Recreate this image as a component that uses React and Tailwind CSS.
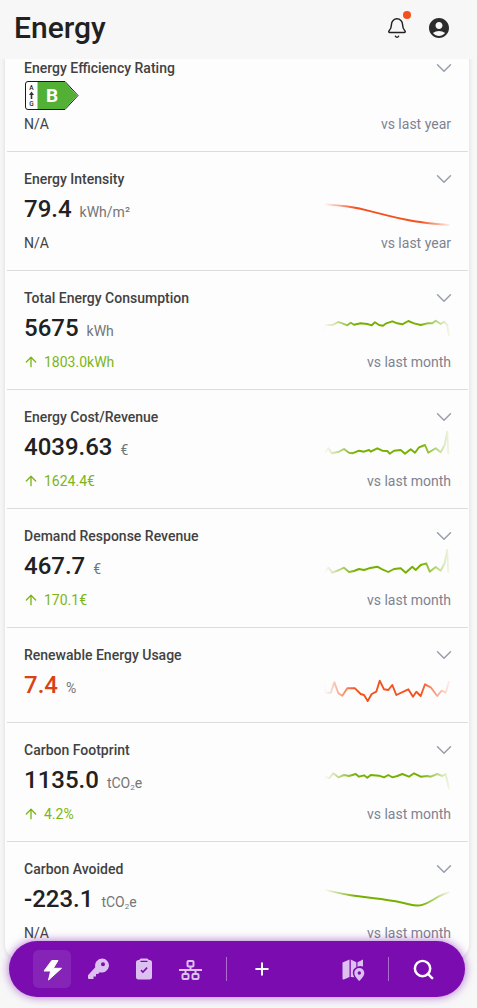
import React from "react";
import { ArrowUp, ChevronDown, Search, Plus, Bell } from "lucide-react";
import { MdAccountCircle } from "react-icons/md";

const ORANGE = "#f4511e";
const GREEN = "#76b000";

function toPath(points, smooth) {
  if (!smooth) return "M" + points.map((p) => p.map((n) => n.toFixed(1)).join(" ")).join("L");
  let d = `M${points[0][0].toFixed(1)} ${points[0][1].toFixed(1)}`;
  for (let i = 1; i < points.length - 1; i++) {
    const mx = (points[i][0] + points[i + 1][0]) / 2;
    const my = (points[i][1] + points[i + 1][1]) / 2;
    d += `Q${points[i][0].toFixed(1)} ${points[i][1].toFixed(1)} ${mx.toFixed(1)} ${my.toFixed(1)}`;
  }
  const l = points[points.length - 1];
  return d + `L${l[0].toFixed(1)} ${l[1].toFixed(1)}`;
}

function Spark({ id, color, pts, oy, top, smooth }) {
  const points = pts.map(([x, y]) => [300 + x / 3 - 325, oy + y / 3 - top - 1]);
  return (
    <svg viewBox="0 0 127 34" className="ml-auto h-[34px] w-[127px] shrink-0 overflow-visible" fill="none">
      <defs>
        <linearGradient id={id} gradientUnits="userSpaceOnUse" x1="0" y1="0" x2="127" y2="0">
          <stop offset="0" stopColor={color} stopOpacity="0" />
          <stop offset="0.25" stopColor={color} stopOpacity="1" />
          <stop offset="0.76" stopColor={color} stopOpacity="1" />
          <stop offset="0.9" stopColor={color} stopOpacity="0.45" />
          <stop offset="1" stopColor={color} stopOpacity="0.03" />
        </linearGradient>
      </defs>
      <path d={toPath(points, smooth)} stroke={`url(#${id})`} strokeWidth="1.9" strokeLinejoin="round" strokeLinecap="round" />
    </svg>
  );
}

function Badge() {
  return (
    <svg width="54" height="29" viewBox="0 0 54 29" className="ml-[1px]">
      <path d="M3 .5H40L53 14.5L40 28.5H3A2.5 2.5 0 0 1 .5 26V3A2.5 2.5 0 0 1 3 .5Z" fill="#fff" stroke="#1a1a1a" strokeWidth="1" />
      <path d="M12.500 1H39.800L52.300 14.500L39.800 28H12.500Z" fill="#52b034" />
      <text x="6.500" y="9" textAnchor="middle" fontSize="6.500" fontFamily="Roboto, sans-serif" fontWeight="500" fill="#222">A</text>
      <path d="M6.500 10.500L9 14H7.300V18H5.700V14H4Z" fill="#333" />
      <text x="6.500" y="25" textAnchor="middle" fontSize="6.500" fontFamily="Roboto, sans-serif" fontWeight="500" fill="#222">G</text>
      <text x="27" y="21" textAnchor="middle" fontSize="19" fontFamily="Roboto, sans-serif" fontWeight="700" fill="#fff">B</text>
    </svg>
  );
}

function Unit({ children }) {
  return <span className="text-[14px] text-[#757575]">{children}</span>;
}

function CO2() {
  return (
    <span className="text-[14px] text-[#757575]">
      tCO<sub className="text-[8px]">2</sub>e
    </span>
  );
}

function Row({ title, value, unit, valueColor = "text-[#212121]", spark, badge, delta, compare, last }) {
  return (
    <div className={`mr-[1px] ml-[2px] pt-[17px] pr-[17px] pl-[17px] ${compare ? "pb-[17px]" : "pb-[20px]"} ${last ? "" : "border-b border-[#dcdcdc]"}`}>
      <div className="flex h-5 items-center justify-between">
        <span className="text-[14px] font-medium text-[#424242]">{title}</span>
        <ChevronDown size={26} strokeWidth={1.4} className="mr-[-6px] text-[#9aa0ae]" />
      </div>
      <div className="mt-[3px] flex h-[34px] items-center">
        {badge ? (
          <div className="h-full"><Badge /></div>
        ) : (
          <div className="flex items-baseline">
            <span className={`text-[24px] font-medium ${valueColor}`}>{value}</span>
            <span className="ml-[8px]">{unit}</span>
          </div>
        )}
        {spark}
      </div>
      {compare && (
        <div className={`${badge ? "mt-[-1px]" : "mt-[7px]"} flex h-5 items-center justify-between text-[14px]`}>
          {delta ? (
            <span className="flex items-center gap-[5px] text-[#7cb518]">
              <ArrowUp size={16} strokeWidth={2} className="ml-[-1px]" />
              {delta}
            </span>
          ) : (
            <span className="text-[#424242]">N/A</span>
          )}
          <span className="text-[#7d8392]">{compare}</span>
        </div>
      )}
    </div>
  );
}

function NavBtn({ children, active }) {
  return (
    <div className={`flex h-[38px] w-[38px] shrink-0 items-center justify-center rounded-[6px] ${active ? "bg-white/10" : ""}`}>
      {children}
    </div>
  );
}

const total = [[75,425],[78,405],[100,405],[118,396],[130,400],[145,406],[155,398],[165,404],[185,400],[205,402],[218,406],[228,397],[240,405],[252,407],[262,400],[280,394],[295,400],[310,403],[328,393],[345,400],[365,405],[385,400],[400,400],[410,392],[425,402],[435,395],[445,405],[450,435]];
const cost = [[75,102],[88,85],[98,100],[120,95],[135,87],[150,98],[160,100],[180,92],[195,95],[210,90],[215,95],[235,85],[250,92],[265,93],[272,101],[285,92],[305,90],[318,101],[335,88],[348,98],[360,82],[378,75],[388,98],[410,85],[425,97],[437,75],[445,35],[448,100]];
const demand = [[75,458],[88,443],[100,458],[120,450],[135,443],[150,456],[165,453],[180,447],[195,450],[210,445],[235,440],[250,448],[268,456],[285,447],[305,445],[320,458],[340,440],[350,450],[365,435],[382,430],[392,455],[410,441],[425,452],[437,430],[445,390],[448,455]];
const renew = [[72,30],[80,68],[95,68],[106,37],[118,70],[130,77],[145,55],[168,55],[185,72],[195,75],[206,93],[218,72],[232,65],[242,32],[255,58],[268,60],[280,45],[292,75],[328,58],[342,80],[352,65],[365,78],[378,43],[395,52],[415,78],[428,62],[440,68],[450,35]];
const carbon = [[72,350],[76,318],[90,325],[103,310],[118,322],[135,315],[150,318],[170,312],[180,320],[195,316],[205,323],[215,315],[240,317],[255,322],[268,315],[280,322],[295,318],[310,312],[330,320],[345,310],[365,320],[385,318],[395,320],[415,312],[430,318],[440,312],[450,355]];
const avoided = [[72,58],[130,72],[180,79],[270,90],[310,98],[355,109],[385,100],[420,78],[450,67]];
const intensity = [[75,43],[130,47],[180,55],[240,70],[300,85],[360,97],[450,105]];

export default function App() {
  return (
    <div className="relative h-screen overflow-hidden bg-[#f7f7f7]" style={{ fontFamily: "Roboto, sans-serif" }}>
      <header className="relative z-10 flex h-[59px] items-center justify-between bg-[#f7f7f7] pr-[26px] pl-[14px]">
        <h1 className="mt-[-4px] text-[30px] leading-[56px] font-medium text-[#212121]">Energy</h1>
        <div className="mt-[-3px] flex items-center gap-[19px]">
          <div className="relative">
            <Bell size={22} strokeWidth={1.6} className="text-[#212121]" />
            <span className="absolute top-[-6px] right-[-3px] h-2 w-2 rounded-full bg-[#f4511e]" />
          </div>
          <MdAccountCircle size={24} className="text-[#2b2b2b]" />
        </div>
      </header>

      <main className="mt-[-18px] mr-[8px] ml-[5px] rounded-b-[16px] bg-[#fdfdfd] shadow-[0_0_5px_rgba(0,0,0,0.12)]">
        <Row title="Energy Efficiency Rating" badge compare="vs last year" />
        <Row title="Energy Intensity" value="79.4" unit={<Unit>kWh/m²</Unit>} compare="vs last year"
          spark={<Spark id="s2" color={ORANGE} pts={intensity} oy={190} top={191} smooth />} />
        <Row title="Total Energy Consumption" value="5675" unit={<Unit>kWh</Unit>} delta="1803.0kWh" compare="vs last month"
          spark={<Spark id="s3" color={GREEN} pts={total} oy={190} top={310} />} />
        <Row title="Energy Cost/Revenue" value="4039.63" unit={<Unit>€</Unit>} delta="1624.4€" compare="vs last month"
          spark={<Spark id="s4" color={GREEN} pts={cost} oy={420} top={429} />} />
        <Row title="Demand Response Revenue" value="467.7" unit={<Unit>€</Unit>} delta="170.1€" compare="vs last month"
          spark={<Spark id="s5" color={GREEN} pts={demand} oy={420} top={548} />} />
        <Row title="Renewable Energy Usage" value="7.4" unit={<Unit>%</Unit>} valueColor="text-[#d84315]"
          spark={<Spark id="s6" color={ORANGE} pts={renew} oy={670} top={667} />} />
        <Row title="Carbon Footprint" value="1135.0" unit={<CO2 />} delta="4.2%" compare="vs last month"
          spark={<Spark id="s7" color={GREEN} pts={carbon} oy={670} top={762} />} />
        <Row title="Carbon Avoided" value="-223.1" unit={<CO2 />} compare="vs last month" last
          spark={<Spark id="s8" color={GREEN} pts={avoided} oy={870} top={881} smooth />} />
      </main>

      <nav className="absolute top-[941px] left-[9px] z-20 flex h-[56px] w-[456px] items-center rounded-[28px] bg-[#7a0cb0] pr-[23px] pl-[24px] shadow-[0_0_10px_rgba(122,12,176,0.6)]">
        <div className="flex gap-2">
          <NavBtn active>
            <svg width="24" height="24" viewBox="0 0 24 24">
              <path fill="#fff" stroke="#fff" strokeWidth="1" strokeLinejoin="round" d="M18 3.500H11.800L4 14H10.700L8.500 23L21.500 11.300H13.300Z" />
            </svg>
          </NavBtn>
          <NavBtn>
            <svg width="24" height="24" viewBox="0 0 24 24">
              <path fillRule="evenodd" clipRule="evenodd" fill="#dcc0ef" d="M16 1.500A7 7 0 1 1 13.800 15.150L12 17H10V19.500H7.500V22H3A1 1 0 0 1 2 21V18.200L9.300 10.200A7 7 0 0 1 16 1.500ZM17 5.200A2 2 0 1 0 17 9.200A2 2 0 1 0 17 5.200Z" />
            </svg>
          </NavBtn>
          <NavBtn>
            <svg width="24" height="24" viewBox="0 0 24 24">
              <path fillRule="evenodd" clipRule="evenodd" fill="#dcc0ef" d="M9 1.500h6A2 2 0 0 1 16.700 3H17.500A2.500 2.500 0 0 1 20 5.500V20A2.500 2.500 0 0 1 17.500 22.500H6.500A2.500 2.500 0 0 1 4 20V5.500A2.500 2.500 0 0 1 6.500 3H7.300A2 2 0 0 1 9 1.500ZM9 3.800a.6.6 0 0 0 0 1.300H15a.6.6 0 0 0 0-1.300ZM8.500 13.700L10.900 16.300L15.700 11.200L14.500 10.100L10.900 13.900L9.700 12.600Z" />
            </svg>
          </NavBtn>
          <NavBtn>
            <svg width="24" height="24" viewBox="0 0 24 24" fill="none" stroke="#dcc0ef" strokeWidth="2">
              <rect x="9.500" y="4" width="6" height="5.500" rx="1" />
              <rect x="4.500" y="17" width="6" height="5" rx="1" />
              <rect x="14.500" y="17" width="6" height="5" rx="1" />
              <path d="M12.500 9.500V13M1 13H24M7.500 13V17M17.500 13V17" />
            </svg>
          </NavBtn>
        </div>
        <span className="ml-[17px] h-[24px] w-px bg-white/40" />
        <div className="ml-[16px]">
          <NavBtn><Plus size={20} strokeWidth={2.4} className="text-white" /></NavBtn>
        </div>
        <div className="ml-auto">
          <NavBtn>
            <svg width="25" height="25" viewBox="0 0 25 25">
              <path fill="#dcc0ef" d="M1.500 5.500L8.500 2.500V20L2.800 22.500A1 1 0 0 1 1.500 21.500ZM9.800 2.500L15.300 5.200V10.200A6 6 0 0 0 11.800 15.500C11.800 17 12.500 18.800 13.300 20.200L9.800 20ZM16.500 5.200L22 2.500V9.500A6 6 0 0 0 16.500 9.700Z" />
              <path fillRule="evenodd" fill="#dcc0ef" d="M18.300 11A5 5 0 0 1 23.300 16C23.300 18.800 20.500 22 18.300 24C16 22 13.300 18.800 13.300 16A5 5 0 0 1 18.300 11ZM18.300 14.300A1.700 1.700 0 1 0 18.300 17.700A1.700 1.700 0 1 0 18.300 14.300Z" />
            </svg>
          </NavBtn>
        </div>
        <span className="ml-[16px] h-[24px] w-px bg-white/40" />
        <div className="ml-[15px]">
          <NavBtn><Search size={23} strokeWidth={2.6} className="text-white" /></NavBtn>
        </div>
      </nav>
    </div>
  );
}
